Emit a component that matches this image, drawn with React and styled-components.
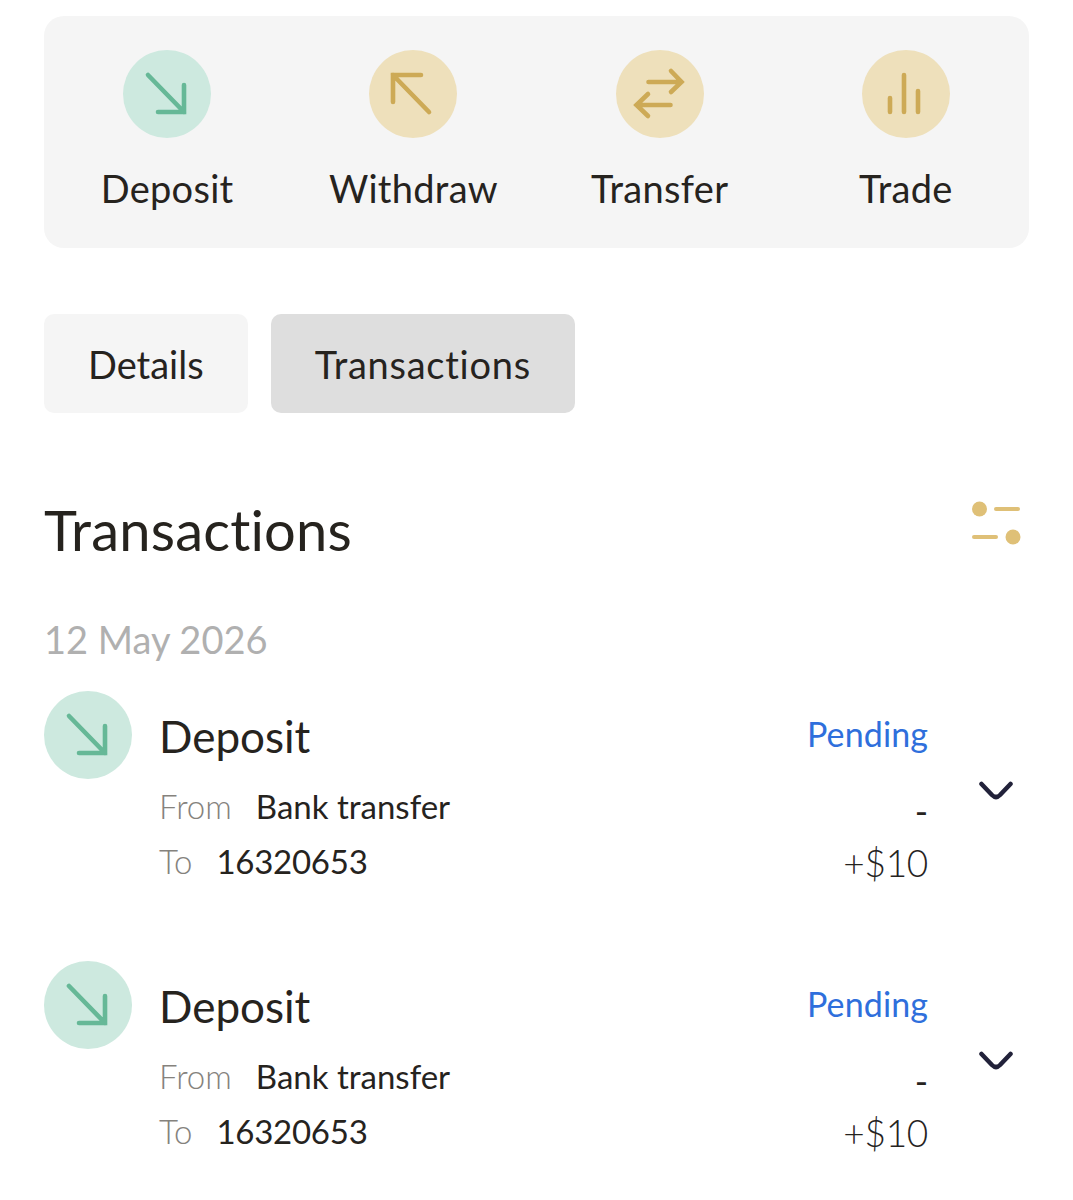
import React from "react";
import styled, { createGlobalStyle } from "styled-components";

const Global = createGlobalStyle`
  html, body { margin: 0; padding: 0; background: #fff; }
  body { font-family: "Lato", "Liberation Sans", sans-serif; color: #26231e; }
  * { box-sizing: border-box; }
`;
const Page = styled.div`width: 1073px; height: 1200px; overflow: hidden; padding: 16px 44px 0;`;
const ActionCard = styled.div`
  display: grid; grid-template-columns: repeat(4, 1fr);
  height: 232px; width: 985px; padding-top: 34px;
  background: #f5f5f5; border-radius: 20px;
`;
const Action = styled.div`display: flex; flex-direction: column; align-items: center; gap: 26px;`;
const Circle = styled.div`
  width: 88px; height: 88px; border-radius: 50%; flex: none;
  display: flex; align-items: center; justify-content: center;
  background: ${p => (p.$tone === "green" ? "#cde9df" : "#eee0bb")};
  color: ${p => (p.$tone === "green" ? "#66b897" : "#cdaa56")};
`;
const ActionLabel = styled.div`font-size: 38px; line-height: 48px; white-space: nowrap; letter-spacing: 0.3px;`;
const Tabs = styled.div`display: flex; gap: 23px; margin-top: 66px;`;
const Tab = styled.div`
  height: 99px; padding: 0 44px; display: flex; align-items: center;
  border-radius: 10px; font-size: 38px;
  letter-spacing: ${p => (p.$active ? "0.75px" : "0")};
  background: ${p => (p.$active ? "#dedede" : "#f5f5f5")};
`;
const Header = styled.div`display: flex; justify-content: space-between; align-items: center; margin-top: 82px; height: 70px;`;
const Title = styled.h1`margin: 0; font-size: 56px; font-weight: 400; line-height: 70px; letter-spacing: 0.2px;`;
const FilterIcon = styled.svg`margin: 0 8px 14px 0; fill: #dfc077;`;
const DateLabel = styled.div`margin-top: 50px; font-size: 38px; line-height: 48px; color: #b0b0b0;`;
const List = styled.div`display: flex; flex-direction: column; gap: 78.5px; margin-top: 28px;`;
const Row = styled.div`display: flex; gap: 28px; height: 191px;`;
const Main = styled.div`flex: 1; padding-top: 20px; margin-left: -1px;`;
const RowTitle = styled.div`font-size: 44px; line-height: 50px;`;
const Meta = styled.div`display: flex; gap: 24px; font-size: 33px; line-height: 40px; margin-top: ${p => p.$top}px;`;
const MetaKey = styled.span`color: #85827d; font-weight: 300;`;
const MetaValue = styled.span`letter-spacing: ${p => (p.$numeric ? "-0.25px" : "0")};`;
const Side = styled.div`display: flex; flex-direction: column; align-items: flex-end; width: 184px; padding-top: 23px;`;
const Status = styled.div`font-size: 34px; line-height: 40px; color: #2f6fdc; letter-spacing: 0.1px;`;
const Dash = styled.div`font-size: 36px; line-height: 40px; margin-top: 37px; font-weight: 400;`;
const Amount = styled.div`font-size: 37px; line-height: 48px; margin-top: 8px; font-weight: 300; letter-spacing: -0.3px;`;
const Chevron = styled.div`width: 73px; padding: 90px 0 0 23px; color: #22223a; flex: none;`;

const Svg = ({ children }) => (
  <svg width="56" height="56" viewBox="0 0 56 56" fill="none" stroke="currentColor" strokeWidth="4.6" strokeLinecap="round" strokeLinejoin="miter">{children}</svg>
);
const DownRight = () => <Svg><path d="M9 9 L45 46 M45 19 V46 H19" /></Svg>;
const UpLeft = () => <Svg><path d="M44 46 L8 9 M8 36 V9 H36" /></Svg>;
const Swap = () => <Svg><path d="M16.500 16 H49.500 M39 5 L49.500 16 L39 26 M38.500 39 H4.500 M16 28 L4.500 39 L16 50" /></Svg>;
const Bars = () => <Svg><path d="M12 32 V46 M26 9 V46 M40 25 V46" /></Svg>;
const Filter = () => (
  <FilterIcon width="49" height="44" viewBox="0 0 49 44">
    <circle cx="7.500" cy="8" r="7.500" /><rect x="22" y="6" width="26" height="4" rx="2" />
    <rect x="0" y="34" width="26" height="4" rx="2" /><circle cx="41" cy="36" r="7.500" />
  </FilterIcon>
);
const ChevronDown = () => (
  <svg width="34" height="20" viewBox="0 0 34 20" fill="none" stroke="currentColor" strokeWidth="4.5" strokeLinecap="round" strokeLinejoin="round"><path d="M2.500 3 L13 14 Q17 18 21 14 L31.500 3" /></svg>
);

const actions = [
  ["Deposit", "green", <DownRight />],
  ["Withdraw", "gold", <UpLeft />],
  ["Transfer", "gold", <Swap />],
  ["Trade", "gold", <Bars />],
];

const Transaction = () => (
  <Row>
    <Circle $tone="green"><DownRight /></Circle>
    <Main>
      <RowTitle>Deposit</RowTitle>
      <Meta $top={25}><MetaKey>From</MetaKey><MetaValue>Bank transfer</MetaValue></Meta>
      <Meta $top={15}><MetaKey>To</MetaKey><MetaValue $numeric>16320653</MetaValue></Meta>
    </Main>
    <Side>
      <Status>Pending</Status>
      <Dash>-</Dash>
      <Amount>+$10</Amount>
    </Side>
    <Chevron><ChevronDown /></Chevron>
  </Row>
);

export default function App() {
  return (
    <Page>
      <Global />
      <ActionCard>
        {actions.map(([label, tone, icon]) => (
          <Action key={label}>
            <Circle $tone={tone}>{icon}</Circle>
            <ActionLabel>{label}</ActionLabel>
          </Action>
        ))}
      </ActionCard>
      <Tabs>
        <Tab>Details</Tab>
        <Tab $active>Transactions</Tab>
      </Tabs>
      <Header><Title>Transactions</Title><Filter /></Header>
      <DateLabel>12 May 2026</DateLabel>
      <List><Transaction /><Transaction /></List>
    </Page>
  );
}
